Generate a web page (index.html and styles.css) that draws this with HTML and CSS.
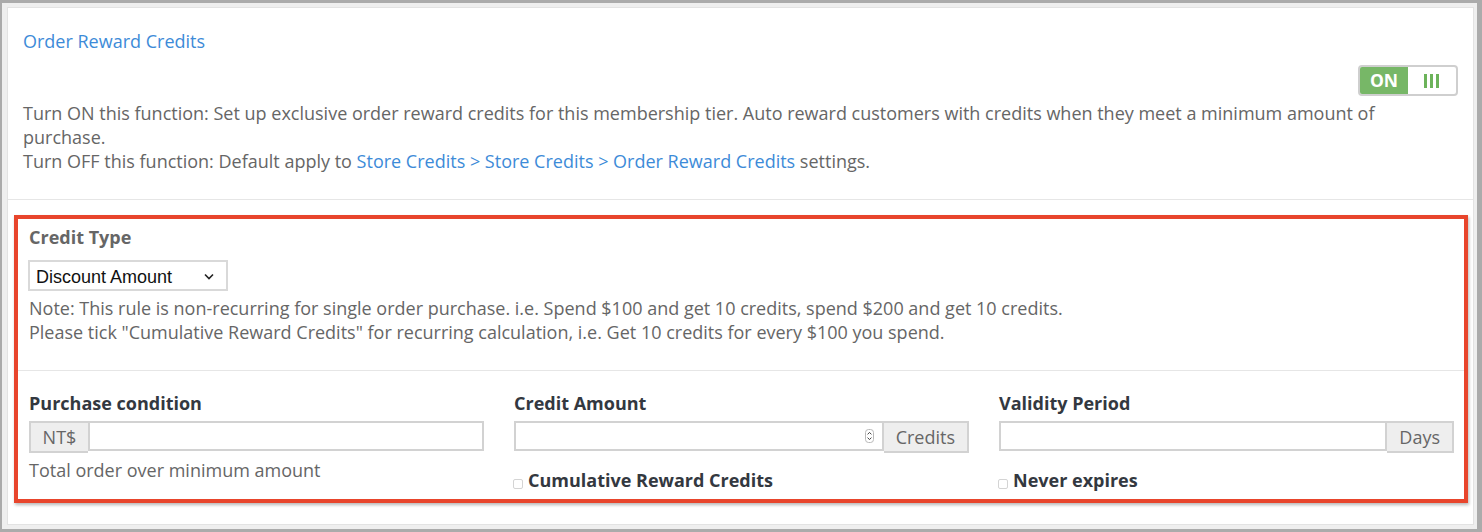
FILE: index.html
```html
<!DOCTYPE html>
<html lang="en">
<head>
<meta charset="utf-8">
<title>Order Reward Credits</title>
<link rel="stylesheet" href="styles.css">
</head>
<body>
<div class="frame">
  <div class="panel">
    <section class="intro">
      <a class="title" href="#">Order Reward Credits</a>
      <div class="toggle-row">
        <div class="toggle">
          <span class="toggle-on">ON</span>
          <span class="toggle-off"><i></i><i></i><i></i></span>
        </div>
      </div>
      <p class="desc">Turn ON this function: Set up exclusive order reward credits for this membership tier. Auto reward customers with credits when they meet a minimum amount of purchase.<br>Turn OFF this function: Default apply to <a href="#">Store Credits &gt; Store Credits &gt; Order Reward Credits</a> settings.</p>
    </section>

    <section class="highlight">
      <div class="credit-type">
        <div class="muted-label">Credit Type</div>
        <div class="select">
          <span class="select-text">Discount Amount</span>
          <svg class="chevron" width="10" height="7" viewBox="0 0 10 7"><path d="M1 1.5 L5 5.5 L9 1.5" fill="none" stroke="#222" stroke-width="1.6"/></svg>
        </div>
        <p class="note">Note: This rule is non-recurring for single order purchase. i.e. Spend $100 and get 10 credits, spend $200 and get 10 credits.<br>Please tick "Cumulative Reward Credits" for recurring calculation, i.e. Get 10 credits for every $100 you spend.</p>
      </div>

      <div class="fields">
        <div class="field">
          <div class="label">Purchase condition</div>
          <div class="input-group">
            <span class="addon addon-left">NT$</span>
            <div class="input"></div>
          </div>
          <div class="help">Total order over minimum amount</div>
        </div>
        <div class="field">
          <div class="label">Credit Amount</div>
          <div class="input-group">
            <div class="input number">
              <svg class="spinner" width="9" height="14" viewBox="0 0 9 14"><rect x="0.5" y="0.5" width="8" height="13" rx="3" fill="#fff" stroke="#b9b9b9"/><path d="M2.6 5.4 L4.5 3.4 L6.4 5.4 M2.6 8.6 L4.5 10.6 L6.4 8.6" fill="none" stroke="#444" stroke-width="1"/></svg>
            </div>
            <span class="addon">Credits</span>
          </div>
          <label class="check"><input type="checkbox"><span>Cumulative Reward Credits</span></label>
        </div>
        <div class="field">
          <div class="label">Validity Period</div>
          <div class="input-group">
            <div class="input"></div>
            <span class="addon">Days</span>
          </div>
          <label class="check"><input type="checkbox"><span>Never expires</span></label>
        </div>
      </div>
    </section>
  </div>
</div>
</body>
</html>
```

FILE: styles.css
```css
* { box-sizing: border-box; }

html, body {
  margin: 0;
  padding: 0;
}

body {
  background: #ababab;
  height: 532px;
  overflow: hidden;
  font-family: "Open Sans", "Noto Sans", sans-serif;
  font-size: 18px;
  line-height: 24px;
  color: #666;
}

.frame {
  margin: 3px 5px 3px 2px;
  height: 526px;
  background: #efefef;
  padding: 4px 3px 4px 5px;
}

.panel {
  height: 518px;
  background: #fff;
  border: 1px solid #e3e3e3;
}

a {
  color: #3d8bd8;
  text-decoration: none;
}

.intro {
  padding: 21px 15px 26px 15px;
  border-bottom: 1px solid #e6e6e6;
}

.title {
  display: block;
  width: max-content;
}

.toggle-row {
  display: flex;
  justify-content: flex-end;
  margin-top: 12px;
}

.toggle {
  display: flex;
  width: 100px;
  height: 31px;
  border: 2px solid #cfcfcf;
  border-radius: 4px;
  overflow: hidden;
  background: #fff;
}

.toggle-on {
  width: 48px;
  background: #77b767;
  color: #fff;
  font-weight: 700;
  font-size: 17.5px;
  display: flex;
  align-items: center;
  justify-content: center;
  line-height: 1;
}

.toggle-off {
  flex: 1;
  display: flex;
  align-items: center;
  justify-content: center;
  gap: 3px;
  padding-right: 2px;
}

.toggle-off i {
  display: block;
  width: 3px;
  height: 14px;
  background: #6cb35a;
}

.desc {
  margin: 5px 0 0 0;
  padding-right: 6px;
}

.highlight {
  margin: 15px 5px 0 6px;
  border: 4.5px solid #e8452c;
  box-shadow: 1px 2px 3px rgba(0, 0, 0, 0.28);
}

.credit-type {
  padding: 6px 11px 26px 11px;
  border-bottom: 1px solid #e6e6e6;
}

.muted-label {
  font-weight: 700;
  color: #666;
}

.select {
  margin: 11px 0 0 -1px;
  width: 200px;
  height: 31px;
  border: 2px solid #d9d9d9;
  display: flex;
  align-items: center;
  justify-content: space-between;
  padding: 2px 12px 0 6px;
  font-family: "Liberation Sans", Arial, sans-serif;
  font-size: 18px;
  color: #111;
}

.chevron {
  margin-top: 0;
}

.note {
  margin: 5px 0 0 0;
}

.fields {
  display: grid;
  grid-template-columns: repeat(3, 1fr);
  column-gap: 30px;
  padding: 19.5px 10px 7px 11px;
}

.label {
  font-weight: 700;
  color: #333840;
}

.input-group {
  display: flex;
  align-items: flex-start;
  margin-top: 6px;
}

.input {
  flex: 1;
  height: 30px;
  border: 2px solid #d2d2d2;
  background: #fff;
}

.input.number {
  display: flex;
  align-items: center;
  justify-content: flex-end;
  padding-right: 8px;
}

.spinner {
  display: block;
}

.addon {
  height: 32px;
  border: 2px solid #d2d2d2;
  border-left: none;
  background: #eeeeee;
  padding: 0 12px;
  display: flex;
  align-items: center;
  color: #666;
}

.addon-left {
  border-left: 2px solid #d2d2d2;
  border-right: none;
  width: 59px;
  justify-content: center;
  padding: 0;
}

.help {
  margin-top: 5px;
}

.check {
  display: flex;
  align-items: baseline;
  margin-top: 15px;
  font-weight: 700;
  color: #333840;
}

.check input {
  appearance: none;
  -webkit-appearance: none;
  width: 10px;
  height: 10px;
  margin: 0 5px 0 -1px;
  border: 1px solid #d4d4d4;
  border-radius: 2px;
  background: #fff;
  position: relative;
  top: 2px;
}
```
